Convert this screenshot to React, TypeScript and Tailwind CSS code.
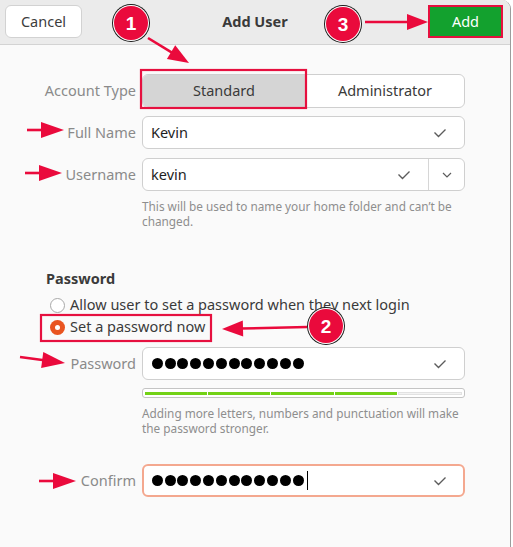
import React from "react";

const Check = () => (
  <svg width="14" height="10" viewBox="0 0 14 10" className="shrink-0">
    <polyline points="1.5,4.5 5.5,8.5 12.5,1.5" fill="none" stroke="#5c5c5c" strokeWidth="1.4" />
  </svg>
);

const Chevron = () => (
  <svg width="10" height="6" viewBox="0 0 10 6">
    <polyline points="1,1 5,5 9,1" fill="none" stroke="#5c5c5c" strokeWidth="1.2" />
  </svg>
);

const Dots = () => (
  <div className="flex items-center">
    {Array.from({ length: 12 }).map((_, i) => (
      <span key={i} className="w-[12.8px] flex justify-center">
        <span className="block w-[11px] h-[11px] rounded-full bg-black" />
      </span>
    ))}
  </div>
);

const Label = ({ children }: { children: React.ReactNode }) => (
  <div className="w-[136px] text-right pr-0 text-[14.5px] text-[#8a8a8a]">{children}</div>
);

const RED = "#ea0a3c";

function ArrowHead({ x1, y1, x2, y2, len = 21, half = 8 }: { x1: number; y1: number; x2: number; y2: number; len?: number; half?: number }) {
  const dx = x2 - x1;
  const dy = y2 - y1;
  const d = Math.hypot(dx, dy);
  const ux = dx / d;
  const uy = dy / d;
  const bx = x2 - ux * len;
  const by = y2 - uy * len;
  const px = -uy * half;
  const py = ux * half;
  return (
    <g>
      <line x1={x1} y1={y1} x2={bx + ux * 2} y2={by + uy * 2} stroke={RED} strokeWidth="2.6" />
      <polygon points={`${x2},${y2} ${bx + px},${by + py} ${bx - px},${by - py}`} fill={RED} />
    </g>
  );
}

function Badge({ cx, cy, n }: { cx: number; cy: number; n: string }) {
  return (
    <g>
      <circle cx={cx} cy={cy} r="19" fill="#1a1a1a" />
      <circle cx={cx} cy={cy} r="18" fill="#ffffff" />
      <circle cx={cx} cy={cy} r="17" fill={RED} />
      <text x={cx} y={cy + 6.5} textAnchor="middle" fontFamily="'Liberation Sans', Arial, sans-serif" fontWeight="700" fontSize="19" fill="#ffffff">
        {n}
      </text>
    </g>
  );
}

export default function App() {
  return (
    <div className="relative w-[513px] h-[547px] bg-white overflow-hidden font-['Noto_Sans',sans-serif]">
      <div className="w-[511px] h-[547px] flex flex-col bg-[#fafafa] border-r border-[#9c9c9c] rounded-tr-[9px] overflow-hidden">
        {/* header */}
        <div className="h-[45px] shrink-0 bg-[#ebebeb] border-b border-[#d3d3d3] flex items-start pt-[5px] pl-[5px] pr-[7px]">
          <button className="w-[77px] h-[33px] bg-white border border-[#d2d2d2] rounded-[6px] text-[14.5px] text-[#3c3c3c] flex items-center justify-center">
            Cancel
          </button>
          <div className="flex-1 text-center text-[14.5px] font-bold text-[#3a3a3a] leading-[33px]">Add User</div>
          <div className="w-[75px] h-[33px] border-2 border-[#e6103f] flex">
            <div className="flex-1 bg-[#13a12e] text-white text-[14.5px] flex items-center justify-center">Add</div>
          </div>
        </div>

        {/* body */}
        <div className="flex flex-col">
          {/* account type */}
          <div className="mt-[29px] h-[34px] flex items-center gap-[6px]">
            <Label>Account Type</Label>
            <div className="w-[323px] h-[34px] flex border border-[#cfcfcf] rounded-[6px] overflow-hidden bg-white">
              <div className="w-[163px] bg-[#d5d5d5] flex items-center justify-center text-[14.5px] text-[#3a3a3a] border-r border-[#cfcfcf]">
                Standard
              </div>
              <div className="flex-1 flex items-center justify-center text-[14.5px] text-[#3a3a3a]">Administrator</div>
            </div>
          </div>

          {/* full name */}
          <div className="mt-[8px] h-[33px] flex items-center gap-[6px]">
            <Label>Full Name</Label>
            <div className="w-[323px] h-[33px] flex items-center border border-[#cfcfcf] rounded-[6px] bg-white pl-[8px] pr-[17px]">
              <span className="flex-1 text-[14.5px] text-[#1e1e1e]">Kevin</span>
              <Check />
            </div>
          </div>

          {/* username */}
          <div className="mt-[9px] h-[33px] flex items-center gap-[6px]">
            <Label>Username</Label>
            <div className="w-[323px] h-[33px] flex items-center border border-[#cfcfcf] rounded-[6px] bg-white">
              <div className="flex-1 h-full flex items-center pl-[8px] pr-[17px] border-r border-[#d6d6d6]">
                <span className="flex-1 text-[14.5px] text-[#1e1e1e]">kevin</span>
                <Check />
              </div>
              <div className="w-[35px] flex items-center justify-center">
                <Chevron />
              </div>
            </div>
          </div>

          {/* hint */}
          <div className="mt-[8px] ml-[142px] w-[340px] text-[11.8px] leading-[15px] text-[#8e8e8e]">
            This will be used to name your home folder and can’t be
            <br />
            changed.
          </div>

          {/* Password heading */}
          <div className="mt-[39px] ml-[46px] text-[14.5px] font-bold text-[#3a3a3a] leading-[20px]">Password</div>

          <div className="mt-[6px] ml-[50px] h-[22px] flex items-center gap-[5px]">
            <span className="w-[15px] h-[15px] rounded-full border border-[#a8a8a8] bg-white" />
            <span className="text-[14.5px] text-[#3a3a3a]">Allow user to set a password when they next login</span>
          </div>
          <div className="ml-[50px] h-[22px] flex items-center gap-[5px]">
            <span className="w-[15px] h-[15px] rounded-full bg-[#e95420] flex items-center justify-center">
              <span className="w-[5px] h-[5px] rounded-full bg-white" />
            </span>
            <span className="text-[14.5px] text-[#3a3a3a]">Set a password now</span>
          </div>

          {/* password */}
          <div className="mt-[9px] h-[33px] flex items-center gap-[6px]">
            <Label>Password</Label>
            <div className="w-[323px] h-[33px] flex items-center border border-[#cfcfcf] rounded-[6px] bg-white pl-[8px] pr-[17px]">
              <div className="flex-1">
                <Dots />
              </div>
              <Check />
            </div>
          </div>

          {/* strength */}
          <div className="mt-[8px] ml-[142px] w-[323px] h-[10px] border border-[#c4c4c4] rounded-[3px] bg-white flex items-center gap-[1px] px-[2px]">
            <div className="flex-1 h-[3px] bg-[#73d216]" />
            <div className="flex-1 h-[3px] bg-[#73d216]" />
            <div className="flex-1 h-[3px] bg-[#73d216]" />
            <div className="flex-1 h-[3px] bg-[#73d216]" />
            <div className="flex-1 h-[3px] bg-[#f3f3f3] border border-[#e2e2e2]" />
          </div>

          <div className="mt-[8px] ml-[142px] w-[340px] text-[11.8px] leading-[15px] text-[#8e8e8e]">
            Adding more letters, numbers and punctuation will make
            <br />
            the password stronger.
          </div>

          {/* confirm */}
          <div className="mt-[28px] h-[33px] flex items-center gap-[6px]">
            <Label>Confirm</Label>
            <div className="w-[323px] h-[33px] flex items-center border-2 border-[#f4a88f] rounded-[6px] bg-white pl-[7px] pr-[16px]">
              <div className="flex-1 flex items-center">
                <Dots />
                <span className="ml-[2px] w-[1px] h-[19px] bg-black" />
              </div>
              <Check />
            </div>
          </div>
        </div>
      </div>

      {/* annotations overlay */}
      <svg className="absolute inset-0 pointer-events-none" width="513" height="547" viewBox="0 0 513 547">
        <rect x="141" y="70" width="165" height="38" fill="none" stroke="#e6103f" strokeWidth="2.2" />
        <rect x="41" y="315" width="170" height="26" fill="none" stroke="#e6103f" strokeWidth="2.2" />
        <ArrowHead x1={148} y1={38} x2={189} y2={63} />
        <ArrowHead x1={365} y1={22} x2={428} y2={22} />
        <ArrowHead x1={307} y1={327} x2={222} y2={329} />
        <ArrowHead x1={27} y1={130} x2={64} y2={130} len={23} />
        <ArrowHead x1={25} y1={173} x2={62} y2={173} len={23} />
        <ArrowHead x1={20} y1={357} x2={65} y2={363} len={23} />
        <ArrowHead x1={39} y1={481} x2={76} y2={481} len={23} />
        <Badge cx={131} cy={23} n="1" />
        <Badge cx={343} cy={24} n="3" />
        <Badge cx={326} cy={326} n="2" />
      </svg>
    </div>
  );
}
